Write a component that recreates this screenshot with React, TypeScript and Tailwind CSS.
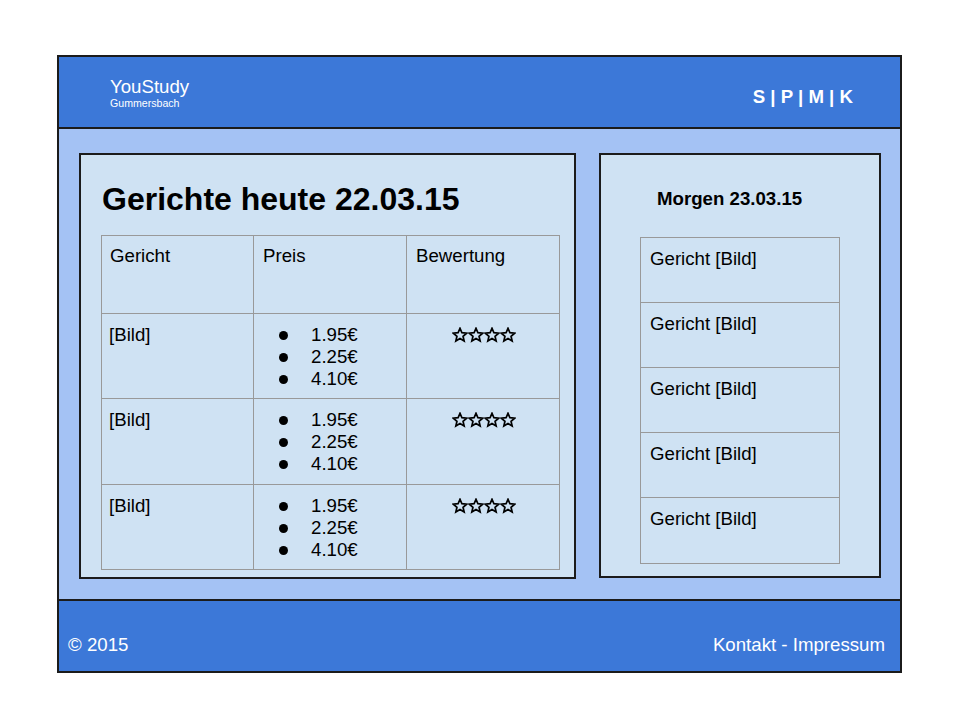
import React from "react";

const rows = [0, 1, 2];
const prices = ["1.95€", "2.25€", "4.10€"];

function PriceList() {
  return (
    <ul className="flex flex-col">
      {prices.map((p) => (
        <li key={p} className="flex items-center h-[22px]">
          <span className="w-[57px] pl-[25px] flex items-center">
            <span className="w-[9px] h-[9px] rounded-full bg-black inline-block" />
          </span>
          <span>{p}</span>
        </li>
      ))}
    </ul>
  );
}

function Star() {
  return (
    <svg width="16" height="16" viewBox="0 0 24 24" className="block">
      <polygon
        points="12,2 14.9,8.6 22,9.3 16.6,14 18.2,21 12,17.3 5.8,21 7.4,14 2,9.3 9.1,8.6"
        fill="none"
        stroke="#000"
        strokeWidth="2.6"
        strokeLinejoin="miter"
      />
    </svg>
  );
}

export default function App() {
  return (
    <div
      className="w-[960px] h-[720px] bg-white pl-[57px] pt-[55px] text-[18.67px] text-black"
      style={{ fontFamily: '"Liberation Sans", Arial, sans-serif' }}
    >
      <div className="w-[845px] h-[618px] border-2 border-[#1b1b1b] flex flex-col">
        {/* Header */}
        <header className="h-[72px] shrink-0 bg-[#3c78d8] border-b-2 border-[#1b1b1b] flex items-center justify-between pl-[51px] pr-[47px] text-white">
          <div className="flex flex-col pt-[2px]">
            <span className="text-[18.67px] leading-[20px]">YouStudy</span>
            <span className="text-[10.6px] leading-[12px]">Gummersbach</span>
          </div>
          <div className="font-bold text-[18.67px] pt-[10px]">S | P | M | K</div>
        </header>

        {/* Main */}
        <main className="flex-1 bg-[#a4c2f4] flex gap-[23px] pl-[20px] pt-[24px]">
          {/* Left panel */}
          <section className="w-[497px] h-[426px] bg-[#cfe2f3] border-2 border-[#1b1b1b] pl-[20px] pt-[26px]">
            <h1 className="text-[32px] font-bold leading-[36px] pl-[1px] mb-[18px]">Gerichte heute 22.03.15</h1>
            <table className="border-collapse w-[458px] table-fixed">
              <colgroup>
                <col className="w-[152px]" />
                <col className="w-[153px]" />
                <col className="w-[153px]" />
              </colgroup>
              <tbody>
                <tr className="h-[78px]">
                  <td className="border border-[#999999] align-top pl-[8px] pt-[9px] leading-[22px]">Gericht</td>
                  <td className="border border-[#999999] align-top pl-[9px] pt-[9px] leading-[22px]">Preis</td>
                  <td className="border border-[#999999] align-top pl-[9px] pt-[9px] leading-[22px]">Bewertung</td>
                </tr>
                {rows.map((r) => (
                  <tr key={r} className={r === 1 ? "h-[86px]" : "h-[85px]"}>
                    <td className="border border-[#999999] align-top pl-[7px] pt-[10px] leading-[22px]">[Bild]</td>
                    <td className="border border-[#999999] align-top pt-[10px] leading-[22px]">
                      <PriceList />
                    </td>
                    <td className="border border-[#999999] align-top pt-[13px]">
                      <div className="flex justify-center pl-[1px]">
                        <Star />
                        <Star />
                        <Star />
                        <Star />
                      </div>
                    </td>
                  </tr>
                ))}
              </tbody>
            </table>
          </section>

          {/* Right panel */}
          <section className="w-[282px] h-[425px] bg-[#cfe2f3] border-2 border-[#1b1b1b] flex flex-col">
            <h2 className="text-[18.67px] font-bold leading-[22px] pt-[33px] pl-[56px]">Morgen 23.03.15</h2>
            <div className="ml-[39px] mt-[27px] w-[200px] border border-[#999999] flex flex-col">
              {[0, 1, 2, 3, 4].map((i) => (
                <div
                  key={i}
                  className={
                    "h-[65px] pl-[9px] pt-[10px] leading-[22px] " +
                    (i < 4 ? "border-b border-[#999999]" : "")
                  }
                >
                  Gericht [Bild]
                </div>
              ))}
            </div>
          </section>
        </main>

        {/* Footer */}
        <footer className="h-[72px] shrink-0 bg-[#3c78d8] border-t-2 border-[#1b1b1b] flex items-center justify-between pl-[9px] pr-[15px] pt-[17px] text-white">
          <span>© 2015</span>
          <span>Kontakt - Impressum</span>
        </footer>
      </div>
    </div>
  );
}
